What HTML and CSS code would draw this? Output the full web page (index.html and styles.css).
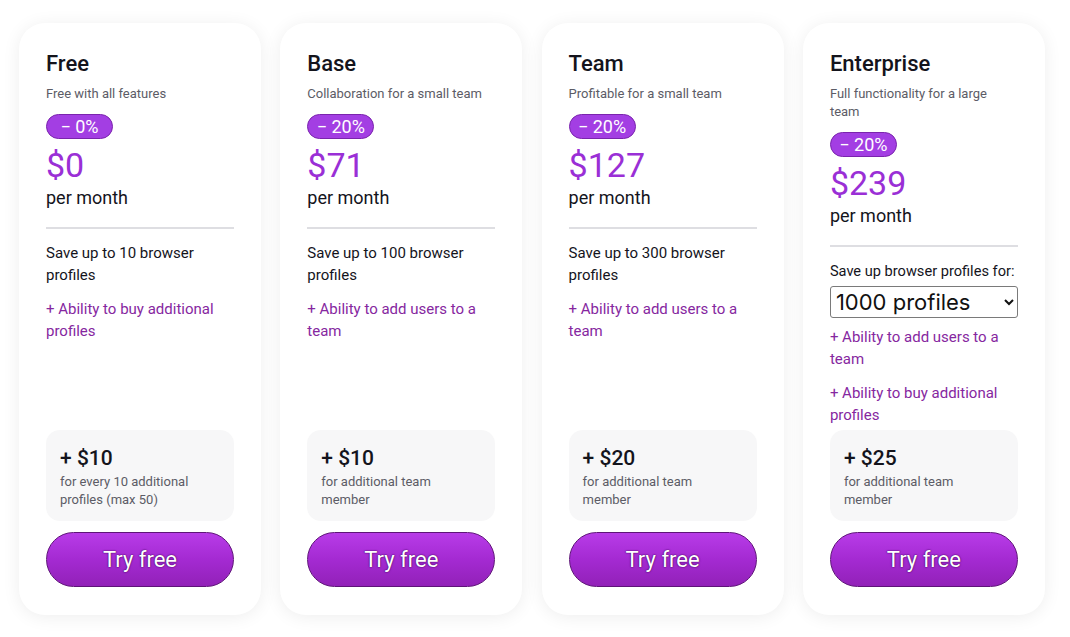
FILE: index.html
```html
<!DOCTYPE html>
<html lang="en">
<head>
<meta charset="utf-8">
<title>Pricing</title>
<link rel="stylesheet" href="styles.css">
</head>
<body>
<div class="plans">
  <div class="card">
    <h2 class="title">Free</h2>
    <p class="subtitle">Free with all features</p>
    <span class="badge">− 0%</span>
    <div class="price">$0</div>
    <div class="period">per month</div>
    <div class="divider"></div>
    <div class="features">
      <p class="feat">Save up to 10 browser profiles</p>
      <p class="feat accent">+ Ability to buy additional profiles</p>
    </div>
    <div class="extra">
      <div class="extra-price">+ $10</div>
      <div class="extra-note">for every 10 additional profiles (max 50)</div>
    </div>
    <button class="btn">Try free</button>
  </div>
  <div class="card">
    <h2 class="title">Base</h2>
    <p class="subtitle">Collaboration for a small team</p>
    <span class="badge">− 20%</span>
    <div class="price">$71</div>
    <div class="period">per month</div>
    <div class="divider"></div>
    <div class="features">
      <p class="feat">Save up to 100 browser profiles</p>
      <p class="feat accent">+ Ability to add users to a team</p>
    </div>
    <div class="extra">
      <div class="extra-price">+ $10</div>
      <div class="extra-note">for additional team member</div>
    </div>
    <button class="btn">Try free</button>
  </div>
  <div class="card">
    <h2 class="title">Team</h2>
    <p class="subtitle">Profitable for a small team</p>
    <span class="badge">− 20%</span>
    <div class="price">$127</div>
    <div class="period">per month</div>
    <div class="divider"></div>
    <div class="features">
      <p class="feat">Save up to 300 browser profiles</p>
      <p class="feat accent">+ Ability to add users to a team</p>
    </div>
    <div class="extra">
      <div class="extra-price">+ $20</div>
      <div class="extra-note">for additional team member</div>
    </div>
    <button class="btn">Try free</button>
  </div>
  <div class="card">
    <h2 class="title">Enterprise</h2>
    <p class="subtitle">Full functionality for a large team</p>
    <span class="badge">− 20%</span>
    <div class="price">$239</div>
    <div class="period">per month</div>
    <div class="divider"></div>
    <div class="features">
      <p class="feat tight">Save up browser profiles for:</p>
      <select class="select">
        <option>1000 profiles</option>
        <option>2000 profiles</option>
        <option>5000 profiles</option>
      </select>
      <p class="feat accent">+ Ability to add users to a team</p>
      <p class="feat accent">+ Ability to buy additional profiles</p>
    </div>
    <div class="extra">
      <div class="extra-price">+ $25</div>
      <div class="extra-note">for additional team member</div>
    </div>
    <button class="btn">Try free</button>
  </div>
</div>
</body>
</html>
```

FILE: styles.css
```css
* { box-sizing: border-box; }
html, body {
  margin: 0;
  padding: 0;
  background: #ffffff;
}
body {
  font-family: Roboto, "Liberation Sans", sans-serif;
  color: #14141c;
}
.plans {
  display: flex;
  gap: 19.3px;
  padding: 23px 19px 22px 19px;
}
.card {
  width: 242px;
  height: 592px;
  flex: none;
  background: #fff;
  border-radius: 26px;
  box-shadow: 0 2px 18px rgba(0, 0, 0, 0.07);
  padding: 28px 27px 28px 27px;
  display: flex;
  flex-direction: column;
  align-items: flex-start;
}
.title {
  margin: 0;
  font-size: 22px;
  font-weight: 500;
  line-height: 26px;
  color: #14141c;
}
.subtitle {
  margin: 8px 0 0 0;
  font-size: 13px;
  line-height: 18px;
  color: #5c5c66;
}
.badge {
  margin-top: 11px;
  display: inline-block;
  width: 67px;
  height: 25px;
  line-height: 23px;
  text-align: center;
  border-radius: 13px;
  background: #a33ee3;
  border: 1px solid #7a24ad;
  color: #fff;
  font-size: 18px;
}
.price {
  margin-top: 7px;
  font-size: 34px;
  line-height: 38px;
  color: #9a2fd6;
  font-weight: 400;
}
.period {
  margin-top: 2px;
  font-size: 18px;
  line-height: 24px;
  color: #14141c;
}
.divider {
  align-self: stretch;
  height: 2px;
  background: #dedee2;
  margin-top: 17px;
}
.features {
  margin-top: 13px;
  display: flex;
  flex-direction: column;
  gap: 12px;
  align-self: stretch;
  flex: 1;
}
.feat {
  margin: 0;
  font-size: 15px;
  line-height: 22px;
  color: #14141c;
}
.feat.accent { color: #86279f; }
.feat.tight {
  margin-bottom: -8px;
  white-space: nowrap;
  font-size: 14.6px;
}
.select {
  width: 100%;
  height: 32px;
  font-family: Inter, Roboto, sans-serif;
  font-size: 22px;
  color: #111;
  background: #fff;
  border: 1px solid #7a7a7a;
  border-radius: 3px;
  padding: 0 1px;
  margin-bottom: -4px;
}
.extra {
  align-self: stretch;
  background: #f7f7f8;
  border-radius: 14px;
  padding: 14px 14px 12px 14px;
  min-height: 90px;
}
.extra-price {
  font-size: 21px;
  line-height: 28px;
  font-weight: 500;
  color: #14141c;
}
.extra-note {
  margin-top: 1px;
  font-size: 13px;
  line-height: 18px;
  color: #5c5c66;
}
.btn {
  margin-top: 11px;
  align-self: stretch;
  height: 55px;
  border-radius: 28px;
  border: 1px solid #5e1478;
  background: linear-gradient(180deg, #b83ce8 0%, #a42ad2 50%, #9221b8 100%);
  color: #fff;
  font-family: Roboto, "Liberation Sans", sans-serif;
  font-size: 22px;
  text-shadow: 0 0 2px #4a0a66, 0 0 1px #4a0a66;
  cursor: pointer;
}
```
